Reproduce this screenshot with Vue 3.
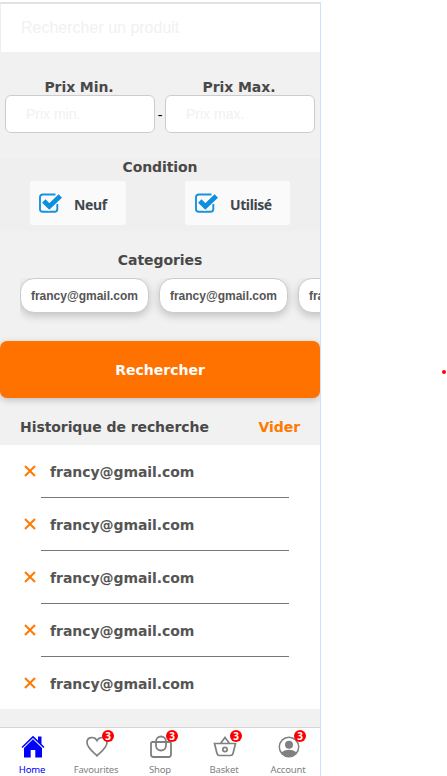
<script setup>
const history = Array.from({ length: 5 }, () => 'francy@gmail.com')
const categories = Array.from({ length: 3 }, () => 'francy@gmail.com')
const conditions = ['Neuf', 'Utilisé']
const tabs = [
  { name: 'Home', icon: 'home' },
  { name: 'Favourites', icon: 'heart', count: 3 },
  { name: 'Shop', icon: 'bag', count: 3 },
  { name: 'Basket', icon: 'basket', count: 3 },
  { name: 'Account', icon: 'user', count: 3 },
]
</script>

<template>
  <div class="page">
    <main class="phone">
      <input class="search" placeholder="Rechercher un produit" />
      <section class="prices">
        <label class="price"><span class="title">Prix Min.</span><input placeholder="Prix min." /></label>
        <span class="dash">-</span>
        <label class="price"><span class="title">Prix Max.</span><input placeholder="Prix max." /></label>
      </section>
      <section class="condition">
        <h2 class="title">Condition</h2>
        <div class="checks">
          <div v-for="c in conditions" :key="c" class="check">
            <svg width="24" height="22" viewBox="0 0 24 22">
              <path d="M17.500 2.500H4.800Q2 2.500 2 5.300V17Q2 19.800 4.800 19.800H16.500Q19.300 19.800 19.300 17V12" fill="none" stroke="#1492e0" stroke-width="1.900" />
              <path d="M5 8.500L11 14.500L22.500 3.500" fill="none" stroke="#fafafa" stroke-width="6.800" />
              <path d="M5.800 9L11.300 14.500L22.300 4" fill="none" stroke="#0d8fe0" stroke-width="4.800" />
            </svg>
            <span>{{ c }}</span>
          </div>
        </div>
      </section>
      <section class="categories">
        <h2 class="title">Categories</h2>
        <div class="chips"><span v-for="(c, i) in categories" :key="i" class="chip">{{ c }}</span></div>
      </section>
      <button class="submit">Rechercher</button>
      <header class="history-head"><span>Historique de recherche</span><span class="clear">Vider</span></header>
      <ul class="history">
        <li v-for="(h, i) in history" :key="i">
          <svg width="12" height="12" viewBox="0 0 12 12"><path d="M1 1L11 11M11 1L1 11" fill="none" stroke="#ff7900" stroke-width="2" /></svg>
          <span>{{ h }}</span>
        </li>
      </ul>
      <nav class="tabs">
        <a v-for="t in tabs" :key="t.name" class="tab" :class="{ active: t.icon === 'home' }">
          <span class="icon">
            <svg v-if="t.icon === 'home'" width="24" height="24" viewBox="0 0 24 24" fill="currentColor">
              <path d="M12 .800L0.500 12L1.500 13L12 3L22.500 13L23.500 12L20.500 9V1.500H17V5.600Z" />
              <path d="M12 4.300L3 13V22.500H9.700V15H14.300V22.500H21V13Z" />
            </svg>
            <svg v-else-if="t.icon === 'heart'" width="24" height="24" viewBox="0 0 24 24" fill="none" stroke="currentColor" stroke-width="1.700">
              <path d="M12 20.800C8 17 2 12.500 2 7.500C2 1.500 9.500 1 12 5.500C14.500 1 22 1.500 22 7.500C22 12.500 16 17 12 20.800Z" />
            </svg>
            <svg v-else-if="t.icon === 'bag'" width="24" height="24" viewBox="0 0 24 24" fill="none" stroke="currentColor" stroke-width="1.800">
              <path d="M3.500 7H20.500Q22 7 22 8.500V19.500Q22 22 19.500 22H4.500Q2 22 2 19.500V8.500Q2 7 3.500 7Z" />
              <rect x="7" y="1.500" width="10" height="14" rx="5" />
            </svg>
            <svg v-else-if="t.icon === 'basket'" width="24" height="24" viewBox="0 0 24 24" fill="none" stroke="currentColor" stroke-width="1.700">
              <path d="M1.500 8.500H22.500L20 18.500Q19.500 20.500 17.500 20.500H6.500Q4.500 20.500 4 18.500ZM7.500 8.500L12 2.500L16.500 8.500" />
              <circle cx="12" cy="14.500" r="2.200" />
            </svg>
            <svg v-else width="24" height="24" viewBox="0 0 24 24">
              <circle cx="12" cy="12" r="9.700" fill="none" stroke="currentColor" stroke-width="1.500" />
              <circle cx="12" cy="9.700" r="4" fill="currentColor" />
              <path d="M4.500 17.200Q12 12.500 19.500 17.200Q16.500 21.500 12 21.500Q7.500 21.500 4.500 17.200Z" fill="currentColor" />
            </svg>
            <b v-if="t.count" class="badge">{{ t.count }}</b>
          </span>
          <span class="tab-name">{{ t.name }}</span>
        </a>
      </nav>
    </main>
    <aside class="canvas"><i class="dot"></i></aside>
  </div>
</template>

<style>
body { margin: 0; background: #fff; }
</style>

<style scoped>
* { box-sizing: border-box; }
.page { width: 447px; height: 776px; display: flex; overflow: hidden; font-family: "DejaVu Sans", sans-serif; padding-top: 2px; }
.phone { width: 321px; height: 774px; flex: none; display: flex; flex-direction: column; background: #f1f1f1; border-right: 1px solid #c9e2ff; overflow: hidden; }
.search { display: block; flex: none; width: 320px; height: 50px; border: 0; border-top: 2px solid #e0e3e3; border-left: 1px solid #eee; padding: 0 20px; background: #fff; font: 16px "Liberation Sans", sans-serif; outline: 0; }
input::placeholder { color: #f1f1f1; opacity: 1; }
.title { margin: 0; font-size: 14px; line-height: 18px; font-weight: 700; color: #494949; text-align: center; letter-spacing: -.08px; }
.prices { height: 106px; flex: none; display: flex; padding: 26px 5px 0; }
.price { width: 150px; display: flex; flex-direction: column; }
.price .title { height: 17px; padding-right: 2px; }
.price input { width: 150px; height: 38px; border: 1px solid #ccc; border-radius: 6px; padding: 0 20px; font: 14px "Liberation Sans", sans-serif; outline: 0; background: #fff; }
.dash { width: 10px; text-align: center; font: 14px/18px "Liberation Serif", serif; padding-top: 28px; }
.condition { height: 73px; flex: none; background: #efefef; }
.checks { display: flex; justify-content: space-between; padding: 5px 30px 0; }
.check { height: 44px; width: 96px; background: #fafafa; border-radius: 2px; display: flex; align-items: center; gap: 12px; padding-left: 8px; font: 700 14px "Noto Sans", sans-serif; letter-spacing: -.4px; color: #3f484e; }
.check:last-child { width: 105px; padding-left: 9px; }
.check span { padding-top: 2px; }
.check svg { flex: none; }
.categories { height: 110px; flex: none; padding-top: 20px; }
.chips { width: 300px; height: 51px; margin: 9px 0 0 20px; display: flex; gap: 10px; overflow: hidden; }
.chip { flex: none; width: 129px; height: 35px; border: 1px solid #ccc; border-radius: 14px; background: #fff; box-shadow: 0 3px 8px rgba(0,0,0,.2); font: 700 12px/35px "Liberation Sans", sans-serif; color: #555; text-align: center; }
.submit { flex: none; width: 320px; height: 57px; border: 0; border-radius: 7px; background: #ff7200; color: #fff; font: 700 14px "DejaVu Sans", sans-serif; box-shadow: 0 2px 7px rgba(0,0,0,.22); padding: 0; }
.history-head { height: 47px; flex: none; display: flex; justify-content: space-between; padding: 19px 20px 0; font-size: 14px; line-height: 20px; font-weight: 700; letter-spacing: -.07px; color: #494949; }
.clear { color: #ff7900; }
.history { list-style: none; margin: 0; padding: 0; height: 264px; flex: none; background: #fff; }
.history li { height: 53px; display: grid; grid-template-columns: 12px 1fr; grid-template-rows: 52px 1px; column-gap: 14px; align-items: center; padding: 0 31px 0 24px; font-size: 14px; font-weight: 700; letter-spacing: -.06px; color: #555; }
.history li span { padding-top: 2px; }
.history li:not(:last-child)::after { content: ""; grid-column: 1 / 3; height: 1px; background: #777; margin-left: 17px; }
.tabs { height: 49px; flex: none; margin-top: 18px; background: #fff; border-top: 1px solid #d5d5d5; display: flex; width: 320px; }
.tab { width: 64px; display: flex; flex-direction: column; align-items: center; color: #808080; padding-top: 7px; }
.tab.active { color: #00f; }
.icon { position: relative; height: 24px; margin-left: 1px; }
.icon svg { display: block; }
.badge { position: absolute; left: 17.5px; top: -5px; width: 12px; height: 12px; border-radius: 50%; background: #f00; color: #fff; font: 700 10px/12px "Noto Sans", sans-serif; text-align: center; }
.tab-name { font: 9.5px/14px "Noto Sans", sans-serif; letter-spacing: -.18px; margin-top: 4px; }
.canvas { flex: 1; display: flex; justify-content: flex-end; padding: 368px 1px 0 0; }
.dot { width: 4px; height: 4px; border-radius: 50%; background: #f00; }
</style>
